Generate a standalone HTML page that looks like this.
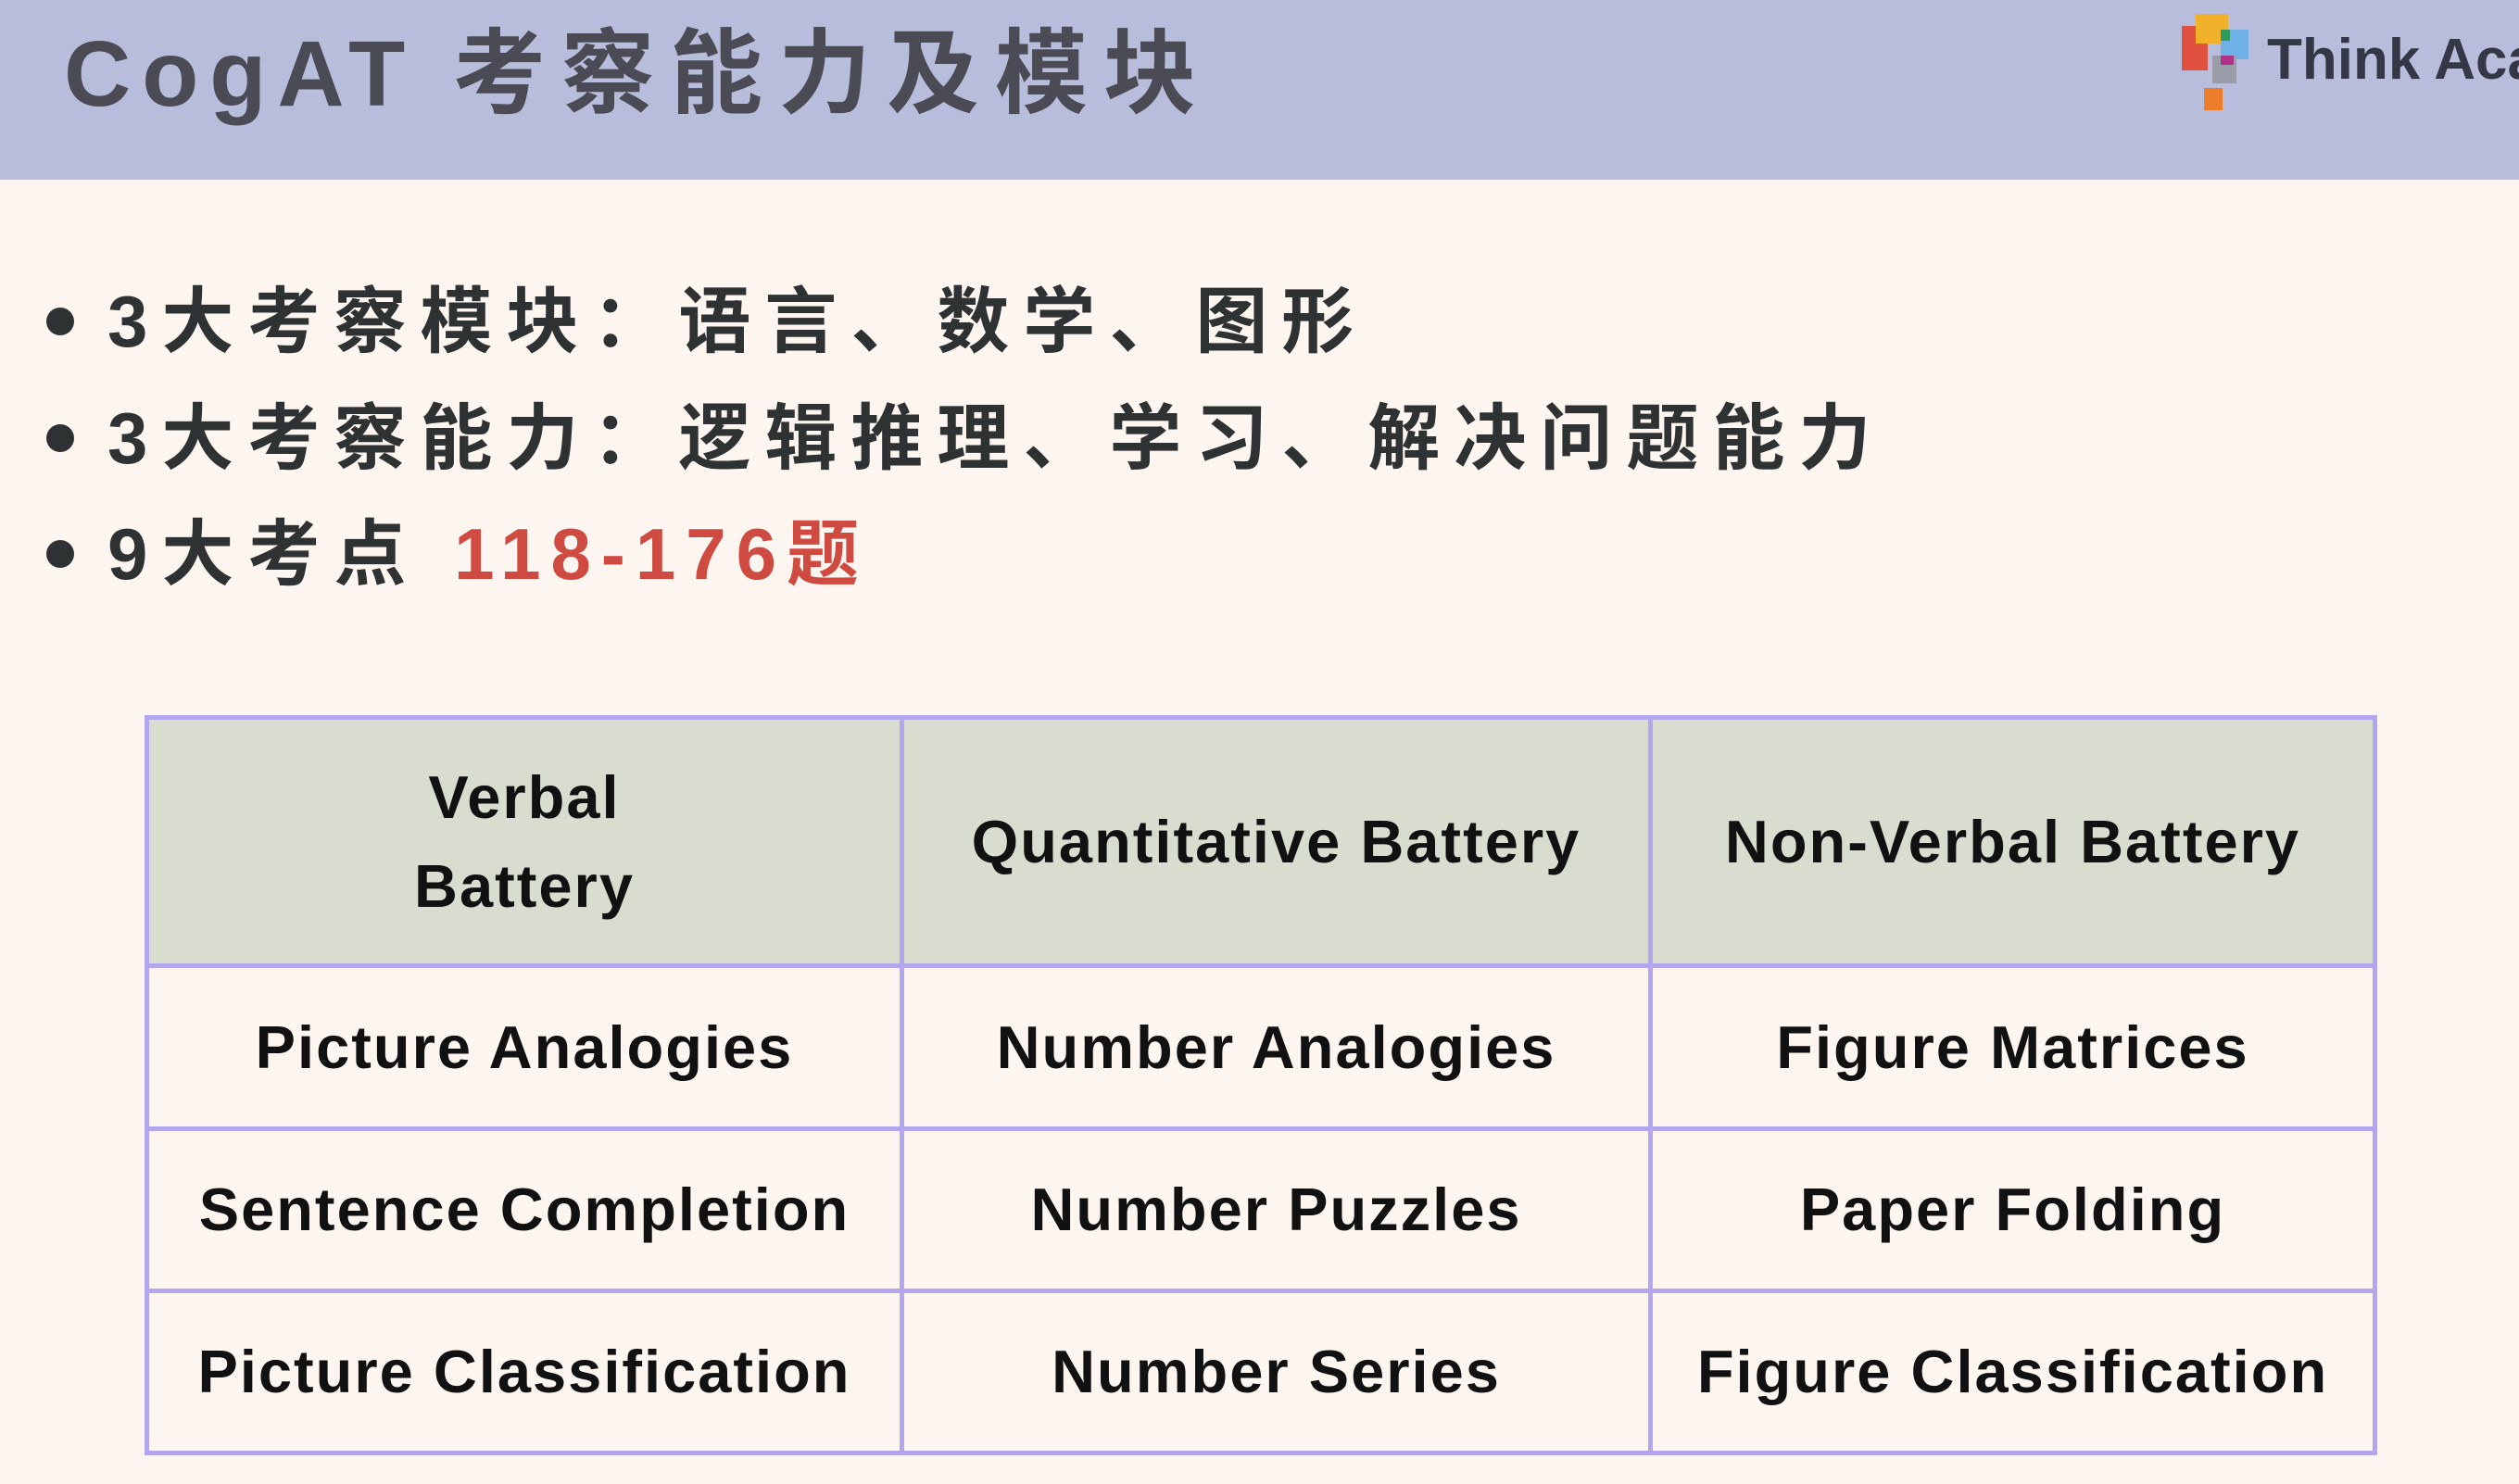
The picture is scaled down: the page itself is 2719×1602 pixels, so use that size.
<!DOCTYPE html>
<html><head><meta charset="utf-8"><style>
html,body{margin:0;padding:0}
body{width:2719px;height:1602px;background:#fdf6f0;position:relative;overflow:hidden;font-family:"Liberation Sans","Noto Sans CJK SC",sans-serif}
.hdr{position:absolute;left:0;top:0;width:2719px;height:194px;background:#b9bddc}
.title{position:absolute;left:69px;top:20px;font-size:100px;font-weight:bold;color:#4b4b55;letter-spacing:12px;white-space:nowrap;line-height:120px}
.title .cj{letter-spacing:17px}
.logo{position:absolute;white-space:nowrap}
.b{position:absolute;left:50px;font-size:78px;font-weight:bold;color:#2f3232;letter-spacing:15px;white-space:nowrap;line-height:100px}
.b .dot{display:inline-block;width:30px;height:30px;border-radius:50%;background:#2f3232;margin-right:36px;vertical-align:middle;position:relative;top:-6px}
.red{color:#cf4a40;letter-spacing:11px}
table{position:absolute;left:156px;top:772px;width:2410px;height:794px;border-collapse:collapse;table-layout:fixed}
td{border:5px solid #b3a6ee;text-align:center;font-weight:bold;font-size:65px;letter-spacing:2px;color:#111;line-height:96px;white-space:nowrap}
tr.h td{background:#d8ddd0}
</style></head><body>
<div class="hdr"></div>
<div class="title">CogAT <span class="cj">考察能力及模块</span></div>
<div class="logo" style="left:2355px;top:28px;width:28px;height:48px;background:#e0513f"></div>
<div class="logo" style="left:2370px;top:15px;width:35px;height:32px;background:#f0b02a"></div>
<div class="logo" style="left:2397px;top:32px;width:30px;height:32px;background:#6fb0e6"></div>
<div class="logo" style="left:2397px;top:32px;width:10px;height:12px;background:#2e9a60"></div>
<div class="logo" style="left:2388px;top:60px;width:26px;height:30px;background:#9a9ca8"></div>
<div class="logo" style="left:2397px;top:60px;width:14px;height:10px;background:#b0308a"></div>
<div class="logo" style="left:2379px;top:95px;width:20px;height:24px;background:#ec7d2a"></div>
<div class="logo" style="left:2447px;top:30px;font-size:62px;font-weight:bold;color:#343846;line-height:70px">Think Aca</div>
<div class="b" style="top:297px"><span class="dot"></span>3大考察模块：语言、数学、图形</div>
<div class="b" style="top:423px"><span class="dot"></span>3大考察能力：逻辑推理、学习、解决问题能力</div>
<div class="b" style="top:548px"><span class="dot"></span>9大考点 <span class="red">118-176题</span></div>
<table>
<colgroup><col style="width:815px"><col style="width:808px"><col></colgroup>
<tr class="h" style="height:268px"><td>Verbal<br>Battery</td><td>Quantitative Battery</td><td>Non-Verbal Battery</td></tr>
<tr style="height:176px"><td>Picture Analogies</td><td>Number Analogies</td><td>Figure Matrices</td></tr>
<tr style="height:175px"><td>Sentence Completion</td><td>Number Puzzles</td><td>Paper Folding</td></tr>
<tr style="height:175px"><td>Picture Classification</td><td>Number Series</td><td>Figure Classification</td></tr>
</table>
</body></html>
